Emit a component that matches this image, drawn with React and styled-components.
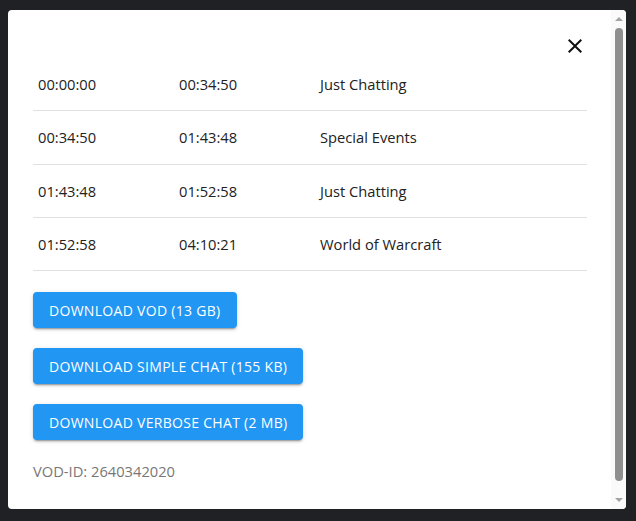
import React from 'react';
import styled, { createGlobalStyle } from 'styled-components';

const GlobalStyle = createGlobalStyle`
	html, body {
		margin: 0;
		padding: 0;
		background: #202124;
		height: 100%;
		overflow: hidden;
	}
	body {
		font-family: "Open Sans", "Noto Sans", sans-serif;
	}
`;

const Backdrop = styled.div`
	padding: 10px 10px 12px 8px;
	height: 521px;
	box-sizing: border-box;
`;

const Modal = styled.div`
	background: #fff;
	border-radius: 4px;
	height: 499px;
	display: flex;
	overflow: hidden;
`;

const Content = styled.div`
	flex: 1;
	min-width: 0;
	padding: 24px 24px 45px 25px;
	display: flex;
	flex-direction: column;
`;

const ScrollBar = styled.div`
	width: 15px;
	flex: none;
	background: #fafafa;
	display: flex;
	flex-direction: column;
	align-items: center;
	padding-top: 7px;
`;

const Arrow = styled.div`
	width: 0;
	height: 0;
	border-left: 4px solid transparent;
	border-right: 4px solid transparent;
	${(p) => (p.$down ? 'border-top' : 'border-bottom')}: 4px solid #a3a3a3;
	margin-top: ${(p) => (p.$down ? '17px' : '0')};
`;

const Thumb = styled.div`
	width: 8px;
	height: 453px;
	margin-top: 7px;
	border-radius: 4px;
	background: #8f8f8f;
`;

const CloseRow = styled.div`
	display: flex;
	justify-content: flex-end;
`;

const CloseButton = styled.button`
	width: 24px;
	height: 24px;
	padding: 0;
	border: none;
	background: none;
	cursor: pointer;
	color: #111;
	display: flex;
	align-items: center;
	justify-content: center;
`;

const Table = styled.table`
	width: 100%;
	border-collapse: collapse;
	margin-bottom: 21px;
`;

const Cell = styled.td`
	padding: 16px 5px;
	font-size: 14.7px;
	line-height: 20.25px;
	color: #222;
	border-bottom: 1px solid #e0e0e0;
	width: ${(p) => p.$width || 'auto'};
	text-align: left;
`;

const Buttons = styled.div`
	display: flex;
	flex-direction: column;
	align-items: flex-start;
	gap: 20px;
`;

const Button = styled.button`
	height: 36px;
	padding: 0 16px;
	border: none;
	border-radius: 4px;
	background: #2196f3;
	color: #fff;
	font-family: inherit;
	font-size: 14px;
	letter-spacing: 0.3px;
	text-transform: uppercase;
	box-shadow: 0 3px 1px -2px rgba(0, 0, 0, 0.2), 0 2px 2px 0 rgba(0, 0, 0, 0.14),
		0 1px 5px 0 rgba(0, 0, 0, 0.12);
	cursor: pointer;
`;

const VodId = styled.div`
	margin-top: 21px;
	font-size: 14.7px;
	line-height: 20px;
	color: #777;
`;

const chapters = [
	['00:00:00', '00:34:50', 'Just Chatting'],
	['00:34:50', '01:43:48', 'Special Events'],
	['01:43:48', '01:52:58', 'Just Chatting'],
	['01:52:58', '04:10:21', 'World of Warcraft'],
];

function CloseIcon() {
	return (
		<svg width="24" height="24" viewBox="0 0 24 24" fill="currentColor">
			<path d="M19 6.41 17.59 5 12 10.59 6.41 5 5 6.41 10.59 12 5 17.59 6.41 19 12 13.41 17.59 19 19 17.59 13.41 12z" />
		</svg>
	);
}

export default function App() {
	return (
		<>
			<GlobalStyle />
			<Backdrop>
				<Modal>
					<Content>
						<CloseRow>
							<CloseButton aria-label="close">
								<CloseIcon />
							</CloseButton>
						</CloseRow>
						<Table>
							<tbody>
								{chapters.map(([start, end, game], i) => (
									<tr key={i}>
										<Cell $width="131px">{start}</Cell>
										<Cell $width="131px">{end}</Cell>
										<Cell>{game}</Cell>
									</tr>
								))}
							</tbody>
						</Table>
						<Buttons>
							<Button>Download VOD (13 GB)</Button>
							<Button>Download simple chat (155 KB)</Button>
							<Button>Download verbose chat (2 MB)</Button>
						</Buttons>
						<VodId>VOD-ID: 2640342020</VodId>
					</Content>
					<ScrollBar>
						<Arrow />
						<Thumb />
						<Arrow $down />
					</ScrollBar>
				</Modal>
			</Backdrop>
		</>
	);
}
